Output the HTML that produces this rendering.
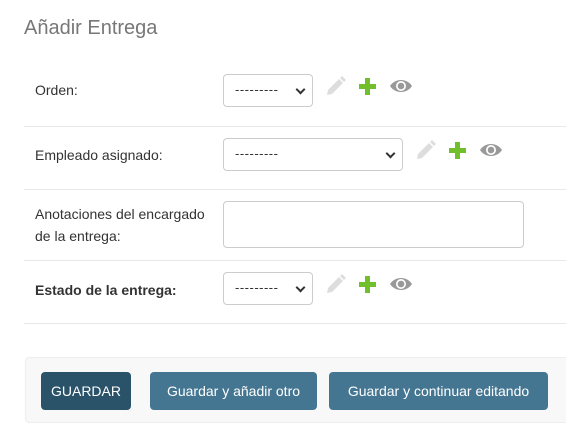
<!DOCTYPE html>
<html><head><meta charset="utf-8"><style>
body{margin:0;width:566px;height:434px;background:#fff;font-family:"Liberation Sans",sans-serif;position:relative;overflow:hidden;color:#333}
.a{position:absolute}
h1{position:absolute;left:24px;top:17px;margin:0;font-weight:300;font-size:20px;color:#777}
.hr{position:absolute;left:24px;right:0;height:1px;background:#e8e8e8}
.lbl{position:absolute;left:35px;font-size:14px;color:#333}
.sel{position:absolute;left:223px;height:33px;border:1px solid #ccc;border-radius:4px;background:#fff;box-sizing:border-box;font-size:13px}
.sel span{position:absolute;left:11px;top:7px;letter-spacing:0.5px}
.sel i{position:absolute;right:8px;top:11px;width:5px;height:5px;border-right:2px solid #333;border-bottom:2px solid #333;transform:rotate(45deg)}
.btn{position:absolute;top:372px;height:38px;border-radius:4px;color:#fff;font-size:14px;line-height:38px;text-align:center}
</style></head><body>
<h1>Añadir Entrega</h1>
<div class="hr" style="top:126px"></div>
<div class="hr" style="top:189px"></div>
<div class="hr" style="top:260px"></div>
<div class="hr" style="top:323px"></div>

<div class="lbl" style="top:82px">Orden:</div>
<div class="sel" style="top:74px;width:90px"><span>---------</span><i></i></div>
<svg class="a" style="left:325px;top:75px" width="90" height="24" viewBox="0 0 90 24">
<path d="M2 20 L3 15 L14 4 L18 8 L7 19 Z" fill="#ddd"/>
<path d="M15 3 L17 1 L21 5 L19 7 Z" fill="#ddd"/>
<path d="M40 3h5v6h6v5h-6v6h-5v-6h-6v-5h6z" fill="#70bf2b"/>
<path d="M65 11 C70 3 82 3 87 11 C82 19 70 19 65 11Z" fill="#999"/>
<circle cx="76" cy="11" r="5" fill="#fff"/><circle cx="76" cy="11" r="3.3" fill="#999"/>
</svg>

<div class="lbl" style="top:147px">Empleado asignado:</div>
<div class="sel" style="top:138px;width:180px"><span>---------</span><i></i></div>
<svg class="a" style="left:415px;top:139px" width="90" height="24" viewBox="0 0 90 24">
<path d="M2 20 L3 15 L14 4 L18 8 L7 19 Z" fill="#ddd"/>
<path d="M15 3 L17 1 L21 5 L19 7 Z" fill="#ddd"/>
<path d="M40 3h5v6h6v5h-6v6h-5v-6h-6v-5h6z" fill="#70bf2b"/>
<path d="M65 11 C70 3 82 3 87 11 C82 19 70 19 65 11Z" fill="#999"/>
<circle cx="76" cy="11" r="5" fill="#fff"/><circle cx="76" cy="11" r="3.3" fill="#999"/>
</svg>

<div class="lbl" style="top:203px;line-height:22px">Anotaciones del encargado<br>de la entrega:</div>
<div class="a" style="left:223px;top:201px;width:301px;height:47px;border:1px solid #ccc;border-radius:4px;box-sizing:border-box"></div>

<div class="lbl" style="top:282px;font-weight:bold">Estado de la entrega:</div>
<div class="sel" style="top:272px;width:90px"><span>---------</span><i></i></div>
<svg class="a" style="left:325px;top:273px" width="90" height="24" viewBox="0 0 90 24">
<path d="M2 20 L3 15 L14 4 L18 8 L7 19 Z" fill="#ddd"/>
<path d="M15 3 L17 1 L21 5 L19 7 Z" fill="#ddd"/>
<path d="M40 3h5v6h6v5h-6v6h-5v-6h-6v-5h6z" fill="#70bf2b"/>
<path d="M65 11 C70 3 82 3 87 11 C82 19 70 19 65 11Z" fill="#999"/>
<circle cx="76" cy="11" r="5" fill="#fff"/><circle cx="76" cy="11" r="3.3" fill="#999"/>
</svg>

<div class="a" style="left:25px;top:357px;width:560px;height:66px;background:#f8f8f8;border:1px solid #eee;border-radius:4px;box-sizing:border-box"></div>
<div class="btn" style="left:41px;width:90px;background:#2a5269">GUARDAR</div>
<div class="btn" style="left:150px;width:167px;background:#447692">Guardar y añadir otro</div>
<div class="btn" style="left:329px;width:219px;background:#447692">Guardar y continuar editando</div>
</body></html>
